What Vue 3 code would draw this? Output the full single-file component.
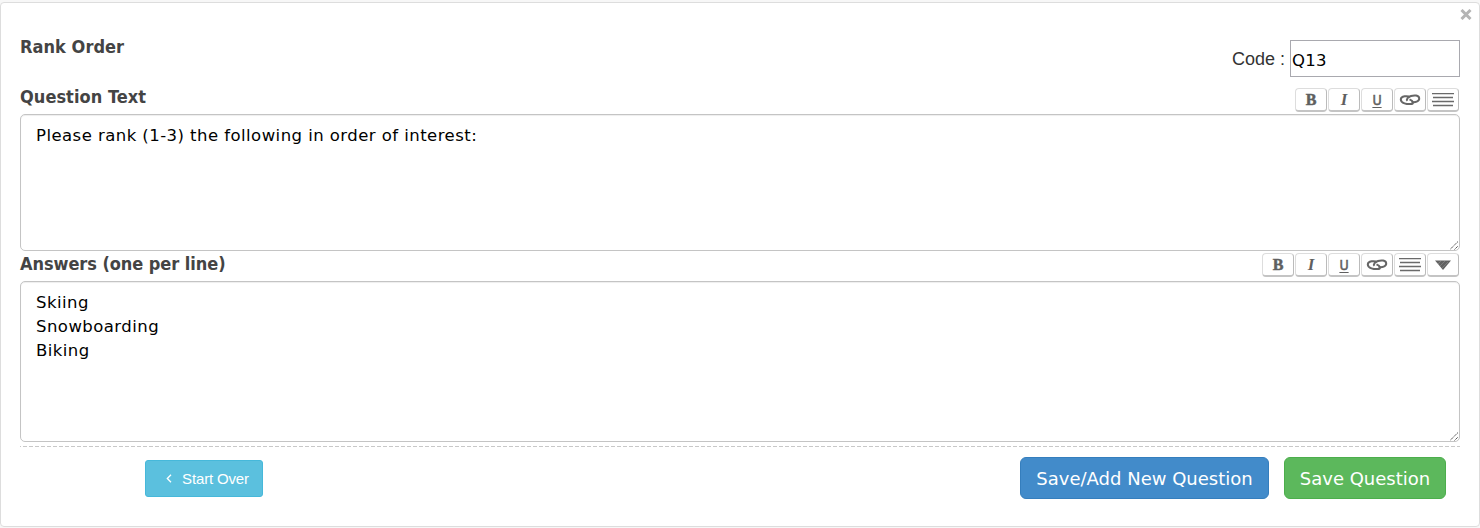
<script setup>
const questionTools = ['bold', 'italic', 'underline', 'link', 'lines']
const editors = [
  { id: 'question', label: 'Question Text', tools: questionTools, lines: ['Please rank (1-3) the following in order of interest:'] },
  { id: 'answers', label: 'Answers (one per line)', tools: [...questionTools, 'down'], lines: ['Skiing', 'Snowboarding', 'Biking'] }
]
</script>

<template>
  <main class="panel">
    <svg class="close" width="12" height="11" viewBox="0 0 12 11"><path d="M1.500 1 10.500 10M10.500 1 1.500 10" /></svg>
    <header class="top">
      <h2 class="title">Rank Order</h2>
      <div class="code"><span class="code-label">Code :</span><div class="code-input">Q13</div></div>
    </header>
    <section v-for="e in editors" :key="e.id" class="editor" :class="e.id">
      <div class="bar">
        <h3 class="title">{{ e.label }}</h3>
        <div class="tools">
          <span v-for="t in e.tools" :key="t" class="tool">
            <b v-if="t === 'bold'" class="glyph bold">B</b>
            <i v-else-if="t === 'italic'" class="glyph italic">I</i>
            <span v-else-if="t === 'underline'" class="glyph underline">U</span>
            <svg v-else-if="t === 'link'" width="22" height="14" viewBox="0 0 22 14">
              <g fill="none" stroke="#666" stroke-width="2">
                <path d="M11 4.300C9 2.500 1.800 2.800 1.800 6.500S8 11.500 12.500 11C15 10.500 14.500 8 10.500 6.300" />
                <path d="M8.500 7.800C7 6.300 9 4 12 3s8-1 8.200 2.300S16 9.700 12.500 8.900" />
              </g>
            </svg>
            <svg v-else-if="t === 'lines'" width="22" height="14" viewBox="0 0 22 14">
              <path d="M0 .5h22M1 4.500h20M0 8.500h22M1 12.500h20" stroke="#6a6a6a" stroke-width="1.400" />
            </svg>
            <svg v-else width="18" height="12" viewBox="0 0 18 12">
              <path d="M1 1.500h16L9 11z" fill="#626262" />
              <path d="M4 5 7 2M6 7l5-5M8 9l6-6" stroke="#898989" stroke-width=".7" />
            </svg>
          </span>
        </div>
      </div>
      <div class="area">
        <div v-for="line in e.lines" :key="line" class="line"><span>{{ line }}</span></div>
        <svg class="grip" width="9" height="9" viewBox="0 0 9 9"><path d="M0 8.500 8 .5M4.500 8.500 8 5" /></svg>
      </div>
    </section>
    <svg class="rule" width="1440" height="1" viewBox="0 0 1440 1"><path d="M0 .5H1440" stroke="#c8c8c8" stroke-dasharray="4 2" stroke-dashoffset="3" /></svg>
    <footer class="actions">
      <button class="btn start"><svg width="6" height="9" viewBox="0 0 6 9"><path d="M5 .7 1.300 4.500 5 8.300" fill="none" stroke="#fff" stroke-width="1.300" /></svg><span>Start Over</span></button>
      <div class="saves">
        <button class="btn add"><span>Save/Add New Question</span></button>
        <button class="btn save"><span>Save Question</span></button>
      </div>
    </footer>
  </main>
</template>

<style>
body { background: #f7f7f7; }
</style>

<style scoped>
* { box-sizing: border-box; }
.panel { position: relative; width: 1480px; height: 525px; margin-top: 2px; padding: 37px 19px 0; background: #fff; border: 1px solid #ddd; border-radius: 4px; font-family: "DejaVu Sans", Verdana, sans-serif; font-size: 16px; color: #000; }
.close { position: absolute; left: 1459px; top: 6px; }
.close path { stroke: #b4b4b4; stroke-width: 3; fill: none; }
.top { height: 48px; display: flex; justify-content: space-between; }
.title { margin: 0; font: bold 18px/24px "DejaVu Sans Condensed", "DejaVu Sans", Tahoma, sans-serif; font-stretch: condensed; letter-spacing: .05px; color: #444; white-space: nowrap; }
.answers .title { letter-spacing: -.06px; margin-top: 1px; }
.top .title { margin-top: -5px; }
.code { display: flex; align-items: flex-start; }
.code-label { font: 18px/38px "Liberation Sans", Arial, sans-serif; color: #333; margin-right: 5px; }
.code-input { width: 170px; height: 37px; border: 1px solid #a9a9af; padding-left: 1px; line-height: 39px; font-size: 16.5px; letter-spacing: .3px; }
.bar { display: flex; justify-content: space-between; align-items: flex-start; height: 26px; }
.question .bar .title { margin-top: -3px; }
.answers .bar { height: 30px; }
.tools { display: flex; gap: 1px; padding-right: 1px; }
.answers .tools { padding-top: 2px; }
.tool { width: 32px; height: 24px; display: flex; align-items: center; justify-content: center; border: 1px solid #ddd; border-right-color: #bbb; border-bottom: 2px solid #c4c4c4; border-radius: 4px; color: #5f5f5f; }
.glyph { line-height: 20px; }
.bold { font: bold 16px/20px "Liberation Serif", serif; -webkit-text-stroke: .5px #5f5f5f; }
.italic { font: italic bold 17px/20px "Liberation Serif", serif; }
.underline { font: 14px/18px "DejaVu Sans Condensed", sans-serif; font-stretch: condensed; -webkit-text-stroke: .5px #5f5f5f; text-decoration: underline; text-underline-offset: 2px; text-decoration-thickness: 1px; }
.area { position: relative; height: 137px; padding: 9px 15px 0; border: 1px solid #c4c4c4; border-radius: 5px; box-shadow: inset 0 1px 1px #eee; }
.answers .area { height: 161px; }
.line { font-size: 16.5px; line-height: 24px; letter-spacing: .45px; white-space: nowrap; }
.grip { position: absolute; right: 0; bottom: 0; }
.grip path { stroke: #555; stroke-width: 1; stroke-dasharray: 1.500 .5; }
.rule { display: block; margin-top: 4px; }
.actions { display: flex; justify-content: space-between; align-items: flex-start; padding: 10px 14px 0 125px; }
.saves { display: flex; gap: 15px; }
.btn { display: flex; align-items: center; justify-content: center; padding: 0; color: #fff; border: 1px solid; white-space: nowrap; }
.start { width: 118px; height: 37px; margin-top: 3px; gap: 10px; padding-left: 7px; border-radius: 3px; background: #5bc0de; border-color: #46b8da; font: 15px "Liberation Sans", Arial, sans-serif; letter-spacing: -.15px; }
.add, .save { height: 42px; border-radius: 6px; font: 18px "DejaVu Sans", Verdana, sans-serif; }
.add { width: 249px; background: #428bca; border-color: #357ebd; }
.save { width: 162px; background: #5cb85c; border-color: #4cae4c; }
</style>
